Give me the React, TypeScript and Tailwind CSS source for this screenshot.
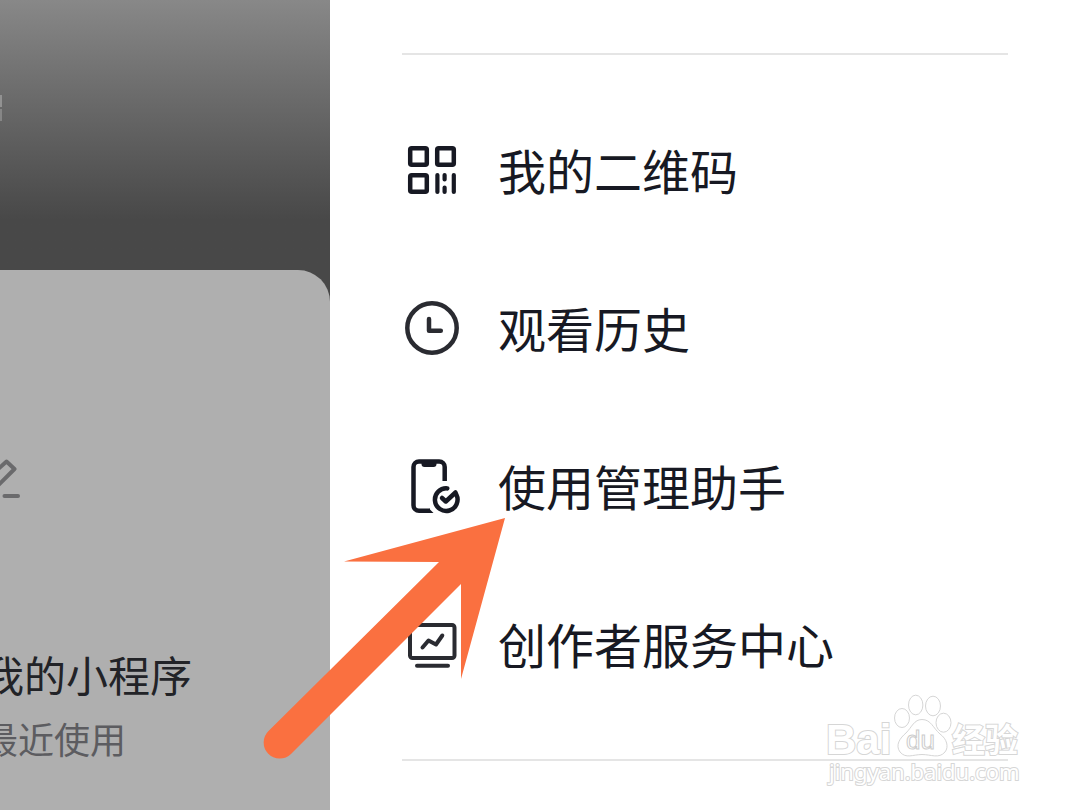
import type { ReactNode } from 'react'

type MenuItem = {
  id: string
  label: string
  icon: ReactNode
}

function QrCodeIcon() {
  return (
    <svg viewBox="0 0 60 60" className="size-[60px]" fill="none" stroke="#171923" strokeWidth="4.5" aria-hidden="true">
      <rect x="8.2" y="9.2" width="16.6" height="16.6" rx="1.5" />
      <rect x="35.2" y="9.2" width="16.6" height="16.6" rx="1.5" />
      <rect x="8.2" y="36.2" width="16.6" height="16.6" rx="1.5" />
      <path d="M35.4 36v17M42.6 36v4.500M42.6 48.500v4.500M51.8 36v17" strokeWidth="4.2" strokeLinecap="round" />
    </svg>
  )
}

function HistoryIcon() {
  return (
    <svg viewBox="0 0 60 60" className="size-[60px]" fill="none" stroke="#2a2b31" strokeWidth="4.5" aria-hidden="true">
      <circle cx="30" cy="31" r="24.7" />
      <path d="M27 22V33.700H38.800" strokeLinecap="round" strokeLinejoin="round" />
    </svg>
  )
}

function AssistantIcon() {
  return (
    <svg viewBox="0 0 60 60" className="size-[60px]" fill="none" stroke="#171923" strokeWidth="4.5" aria-hidden="true">
      <path d="M42.700 26V12a5.500 5.500 0 0 0-5.500-5.500H17a5.500 5.500 0 0 0-5.500 5.500V50.300a5.500 5.500 0 0 0 5.500 5.500H28" />
      <path d="M27 53.600L31.500 58H27Z" fill="#171923" stroke="none" />
      <path d="M19.500 5H34.500V9a3 3 0 0 1-3 3H22.500A3 3 0 0 1 19.500 9Z" fill="#171923" stroke="none" />
      <path d="M45.300 33.400A11.300 11.300 0 1 0 54.300 39.500" strokeLinecap="round" />
      <path d="M40 43L43.800 46.500L53.500 37.500" strokeLinecap="round" strokeLinejoin="round" />
    </svg>
  )
}

function CreatorIcon() {
  return (
    <svg viewBox="0 0 60 60" className="size-[60px]" fill="none" stroke="#2a2b31" strokeWidth="4" aria-hidden="true">
      <rect x="8" y="12" width="44.500" height="33" rx="2.500" />
      <path d="M20.500 34.500L26.500 27.500L34 31.500L40.300 22.500" strokeLinecap="round" strokeLinejoin="round" />
      <path d="M15 52.700H46" strokeLinecap="round" />
    </svg>
  )
}

const MENU_ITEMS: MenuItem[] = [
  { id: 'qrcode', label: '我的二维码', icon: <QrCodeIcon /> },
  { id: 'history', label: '观看历史', icon: <HistoryIcon /> },
  { id: 'assistant', label: '使用管理助手', icon: <AssistantIcon /> },
  { id: 'creator', label: '创作者服务中心', icon: <CreatorIcon /> },
]

function ProfilePanel() {
  return (
    <aside className="flex w-[330px] shrink-0 flex-col overflow-hidden bg-[#484848]">
      <div className="h-[270px] bg-linear-to-b from-[#888888] from-0% to-[#484848] to-[220px] pt-[95px]">
        <div className="h-3 w-0.5 bg-[#929292]" />
        <div className="mt-0.5 h-3 w-0.5 bg-[#868686]" />
      </div>
      <div className="flex-1 rounded-tr-[32px] bg-[#afafaf] pt-[186px]">
        <svg viewBox="0 0 24 48" className="h-12 w-6" fill="none" stroke="#6a6a6c" strokeWidth="4" aria-hidden="true">
          <path d="M-10 20.500L6.500 5.500L14.500 13L-5 32.500" strokeLinejoin="round" />
          <path d="M4.500 40H18" strokeLinecap="round" />
        </svg>
        <div className="-ml-[18px] mt-[140px] whitespace-nowrap">
          <h2 className="text-[42px] leading-[60px] text-[#222327]">我的小程序</h2>
          <p className="mt-1 text-[36px] leading-[60px] text-[#5c5c60]">最近使用</p>
        </div>
      </div>
    </aside>
  )
}

function Arrow() {
  return (
    <svg viewBox="0 0 244 244" className="pointer-events-none absolute left-[263px] top-[516px] size-[244px]" aria-hidden="true">
      <path
        d="M242 2L81 45.500L176 46L5.500 215A16 16 0 0 0 28 238L198 68V163Z"
        fill="#fa7040"
      />
    </svg>
  )
}

function Watermark() {
  return (
    <svg
      viewBox="0 -4 210 104"
      className="pointer-events-none absolute bottom-[14px] right-[46px] h-[104px] w-[210px]"
      fill="#ffffff"
      stroke="#d6d6d6"
      strokeWidth="1"
      role="img"
      aria-label="Baidu 经验"
    >
      <g fontFamily='"Liberation Sans", sans-serif' fontWeight="700">
        <text x="2" y="58" fontSize="42" strokeWidth="2" paintOrder="stroke">Bai</text>
        <ellipse cx="78" cy="22" rx="7.500" ry="9.500" />
        <ellipse cx="91.700" cy="9" rx="7.200" ry="9.800" />
        <ellipse cx="109" cy="10" rx="7.500" ry="9.800" />
        <ellipse cx="119.500" cy="26.700" rx="7.500" ry="9.500" />
        <path d="M98 23.500C107 23.500 109 32 116 38C123 43 125 51 121 56C115 63 107 58.500 98 58.500C89 58.500 82 63 76 56C71 49 76 42 82 37C88 31 90 23.500 98 23.500Z" />
        <text x="82" y="53" fontSize="26" fontWeight="400" stroke="#cccccc">du</text>
      </g>
      <text x="128" y="56" fontSize="33" strokeWidth="2" paintOrder="stroke" fontWeight="700" fontFamily='"Noto Sans CJK SC", sans-serif'>经验</text>
      <text x="5" y="84" fontSize="22" strokeWidth="2" paintOrder="stroke" fontWeight="400" fontFamily='"Noto Sans", sans-serif'>jingyan.baidu.com</text>
    </svg>
  )
}

export default function App() {
  return (
    <div className='relative flex min-h-screen overflow-hidden bg-white font-["Noto_Sans_CJK_SC",sans-serif]'>
      <ProfilePanel />
      <main className="min-w-0 flex-1 px-[72px] pt-[53px]">
        <hr className="border-t-2 border-[#e5e5e5]" />
        <nav className="flex flex-col gap-[86px] pb-20 pt-[78px]">
          {MENU_ITEMS.map((item) => (
            <button key={item.id} type="button" className="flex h-[72px] items-center gap-9 whitespace-nowrap text-left">
              {item.icon}
              <span className="text-[48px] leading-[72px] text-[#171923]">{item.label}</span>
            </button>
          ))}
        </nav>
        <hr className="border-t-2 border-[#e5e5e5]" />
      </main>
      <Arrow />
      <Watermark />
    </div>
  )
}
